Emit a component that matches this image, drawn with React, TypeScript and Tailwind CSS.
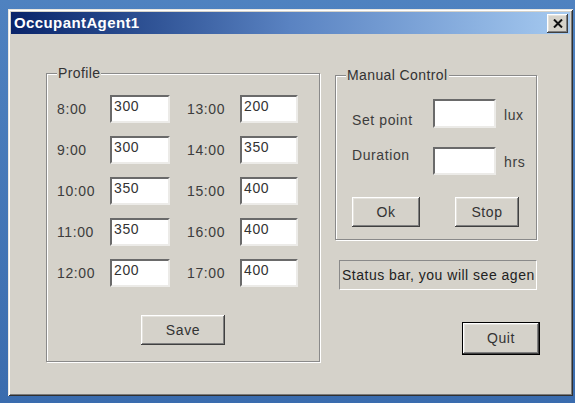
import { FC, ReactNode } from 'react';

const font = { fontFamily: '"Liberation Sans", Arial, sans-serif' };

const raised =
  'shadow-[inset_-1px_-1px_0_#404040,inset_1px_1px_0_#ffffff,inset_-2px_-2px_0_#808080,inset_2px_2px_0_#e4e2dc]';

const Btn: FC<{ label: string; className: string; isDefault?: boolean }> = ({ label, className, isDefault }) => (
  <button
    className={`${className} ${raised} ${isDefault ? 'border border-black' : ''} flex items-center justify-center bg-[#d5d2ca] text-[14px] tracking-[0.6px] text-[#333]`}
  >
    {label}
  </button>
);

const Field: FC<{ value?: string; className: string }> = ({ value, className }) => (
  <div
    className={`${className} bg-white border-2 border-t-[#6a6a6a] border-l-[#6a6a6a] border-r-[#ecebe8] border-b-[#ecebe8] pl-[2px] pt-[1px] text-[14px] leading-[16px] tracking-[0.6px] text-[#333]`}
  >
    {value}
  </div>
);

const Group: FC<{ title: string; className: string; children: ReactNode }> = ({ title, className, children }) => (
  <div
    className={`${className} relative border border-[#8a8a8a] shadow-[1px_1px_0_#ffffff,inset_1px_1px_0_#ffffff]`}
  >
    <span className="absolute -top-[9px] left-[10px] bg-[#d5d2ca] px-[1px] text-[14px] leading-[16px] tracking-[0.4px] text-[#333]">
      {title}
    </span>
    {children}
  </div>
);

const left = [
  ['8:00', '300', '13:00', '200'],
  ['9:00', '300', '14:00', '350'],
  ['10:00', '350', '15:00', '400'],
  ['11:00', '350', '16:00', '400'],
  ['12:00', '200', '17:00', '400'],
];

export default function App() {
  return (
    <div className="w-[575px] h-[403px] overflow-hidden bg-gradient-to-b from-[#4f82c0] to-[#3a6cae] pt-[9px] pl-[8px]" style={font}>
      {/* dialog window */}
      <div className="w-[565px] h-[387px] bg-[#d5d2ca] p-[3px] flex flex-col shadow-[inset_1px_1px_0_#e8e6e0,inset_-1px_-1px_0_#303030,inset_2px_2px_0_#ffffff,inset_-2px_-2px_0_#7a7a7a]">
        {/* title bar */}
        <div className="h-[22px] flex items-center justify-between pl-[3px] pr-[2px] bg-gradient-to-r from-[#0a246a] via-[#5a83c2] to-[#a6caf0]">
          <span className="text-white font-bold text-[15px] tracking-[0.4px]">OccupantAgent1</span>
          <div className={`w-[21px] h-[19px] bg-[#d5d2ca] ${raised} flex items-center justify-center`}>
            <svg width="10" height="9" viewBox="0 0 10 9">
              <path d="M1 0.5 L9 8.5 M9 0.5 L1 8.5" stroke="#111" strokeWidth="2" />
            </svg>
          </div>
        </div>

        {/* body */}
        <div className="flex-1 flex pl-[35px] pt-[39px]">
          <Group title="Profile" className="w-[274px] h-[289px] flex flex-col pt-[21px] pl-[10px]">
            <div className="flex flex-col gap-[13px]">
              {left.map(([t1, v1, t2, v2]) => (
                <div key={t1} className="flex items-center h-[28px] text-[14px] tracking-[0.6px] text-[#3c3c3c]">
                  <span className="w-[53px]">{t1}</span>
                  <Field value={v1} className="w-[60px] h-[28px]" />
                  <span className="w-[53px] ml-[17px]">{t2}</span>
                  <Field value={v2} className="w-[58px] h-[28px]" />
                </div>
              ))}
            </div>
            <div className="flex justify-center pr-[10px] mt-[28px]">
              <Btn label="Save" className="w-[84px] h-[30px]" />
            </div>
          </Group>

          <div className="ml-[15px] w-[205px] pt-[2px] flex flex-col">
            <Group title="Manual Control" className="w-[202px] h-[165px] pt-[23px] pl-[16px] flex flex-col">
              <div className="flex items-start h-[29px] text-[14px] tracking-[0.6px] text-[#3c3c3c]">
                <span className="w-[81px] pt-[13px] leading-[16px]">Set point</span>
                <Field className="w-[63px] h-[29px]" />
                <span className="ml-[8px] pt-[8px] leading-[16px]">lux</span>
              </div>
              <div className="flex items-start h-[28px] mt-[19px] text-[14px] tracking-[0.6px] text-[#3c3c3c]">
                <span className="w-[81px] leading-[16px]">Duration</span>
                <Field className="w-[63px] h-[28px]" />
                <span className="ml-[8px] pt-[7px] leading-[16px]">hrs</span>
              </div>
              <div className="flex mt-[22px]">
                <Btn label="Ok" className="w-[68px] h-[30px]" />
                <Btn label="Stop" className="w-[64px] h-[30px] ml-[35px]" />
              </div>
            </Group>

            {/* status line */}
            <div className="ml-[4px] mt-[20px] w-[198px] h-[30px] flex items-center overflow-hidden whitespace-nowrap border-t border-l border-t-[#8a8a8a] border-l-[#8a8a8a] border-b border-r border-b-white border-r-white pl-[2px] text-[14px] tracking-[0.5px] text-[#222]">
              Status bar, you will see agen
            </div>

            <div className="flex justify-end mt-[32px]">
              <Btn label="Quit" className="w-[78px] h-[33px]" isDefault />
            </div>
          </div>
        </div>
      </div>
    </div>
  );
}
